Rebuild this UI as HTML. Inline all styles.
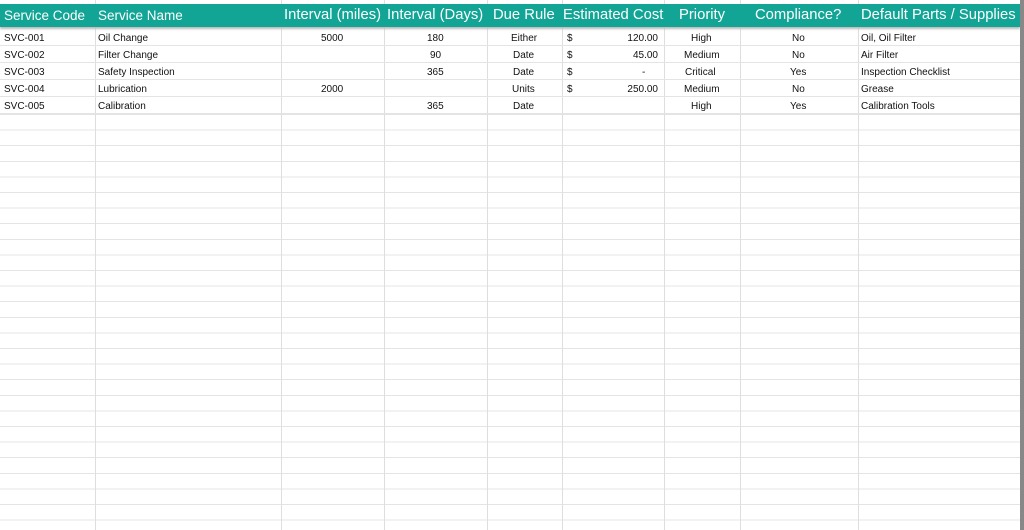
<!DOCTYPE html>
<html><head><style>
body{margin:0;width:1024px;height:530px;overflow:hidden;background:#fff;position:relative;font-family:"Liberation Sans",sans-serif}
.grid{position:absolute;left:0;top:114px;width:1020px;height:416px;background:repeating-linear-gradient(to bottom,#e4e4e4 0,#e4e4e4 1px,transparent 1px,transparent 15.6px)}
.v{position:absolute;top:0;height:530px;width:1px;background:#dedede}
.hd{position:absolute;left:0;top:4px;width:1020px;height:23px;background:#12a596;box-shadow:0 2px 2px #bbb}
.h{position:absolute;top:4px;height:23px;line-height:23px;color:#fff;font-size:14.8px;white-space:nowrap}
.r{position:absolute;left:0;width:1020px;height:17px;border-bottom:1px solid #e4e4e4;box-sizing:border-box}
.c{position:absolute;font-size:10px;color:#111;line-height:19px;white-space:nowrap}
.edge{position:absolute;right:0;top:0;width:4px;height:530px;background:#888}
</style></head><body>
<div class="grid"></div>
<div class="v" style="left:95px"></div><div class="v" style="left:281px"></div><div class="v" style="left:384px"></div><div class="v" style="left:487px"></div><div class="v" style="left:562px"></div><div class="v" style="left:664px"></div><div class="v" style="left:740px"></div><div class="v" style="left:858px"></div>
<div class="r" style="top:29px"></div><div class="r" style="top:46px"></div><div class="r" style="top:63px"></div><div class="r" style="top:80px"></div><div class="r" style="top:97px"></div>
<div class="hd"></div>
<div class="h" style="left:4px;font-size:13.5px">Service Code</div>
<div class="h" style="left:98px;font-size:13.5px">Service Name</div>
<div class="h" style="left:284px">Interval (miles)</div>
<div class="h" style="left:387px">Interval (Days)</div>
<div class="h" style="left:493px">Due Rule</div>
<div class="h" style="left:563px">Estimated Cost</div>
<div class="h" style="left:679px">Priority</div>
<div class="h" style="left:755px">Compliance?</div>
<div class="h" style="left:861px">Default Parts / Supplies</div>

<div style="position:absolute;top:29px;left:0;width:1020px">
<div style="position:relative;height:17px">
<span class="c" style="left:4px">SVC-001</span><span class="c" style="left:98px">Oil Change</span><span class="c" style="left:321px">5000</span><span class="c" style="left:427px">180</span><span class="c" style="left:511px">Either</span><span class="c" style="left:567px">$</span><span class="c" style="right:362px">120.00</span><span class="c" style="left:691px">High</span><span class="c" style="left:792px">No</span><span class="c" style="left:861px">Oil, Oil Filter</span></div>
<div style="position:relative;height:17px">
<span class="c" style="left:4px">SVC-002</span><span class="c" style="left:98px">Filter Change</span><span class="c" style="left:430px">90</span><span class="c" style="left:513px">Date</span><span class="c" style="left:567px">$</span><span class="c" style="right:362px">45.00</span><span class="c" style="left:684px">Medium</span><span class="c" style="left:792px">No</span><span class="c" style="left:861px">Air Filter</span></div>
<div style="position:relative;height:17px">
<span class="c" style="left:4px">SVC-003</span><span class="c" style="left:98px">Safety Inspection</span><span class="c" style="left:427px">365</span><span class="c" style="left:513px">Date</span><span class="c" style="left:567px">$</span><span class="c" style="left:642px">-</span><span class="c" style="left:685px">Critical</span><span class="c" style="left:790px">Yes</span><span class="c" style="left:861px">Inspection Checklist</span></div>
<div style="position:relative;height:17px">
<span class="c" style="left:4px">SVC-004</span><span class="c" style="left:98px">Lubrication</span><span class="c" style="left:321px">2000</span><span class="c" style="left:512px">Units</span><span class="c" style="left:567px">$</span><span class="c" style="right:362px">250.00</span><span class="c" style="left:684px">Medium</span><span class="c" style="left:792px">No</span><span class="c" style="left:861px">Grease</span></div>
<div style="position:relative;height:17px">
<span class="c" style="left:4px">SVC-005</span><span class="c" style="left:98px">Calibration</span><span class="c" style="left:427px">365</span><span class="c" style="left:513px">Date</span><span class="c" style="left:691px">High</span><span class="c" style="left:790px">Yes</span><span class="c" style="left:861px">Calibration Tools</span></div>
</div>
<div class="edge"></div>
</body></html>
